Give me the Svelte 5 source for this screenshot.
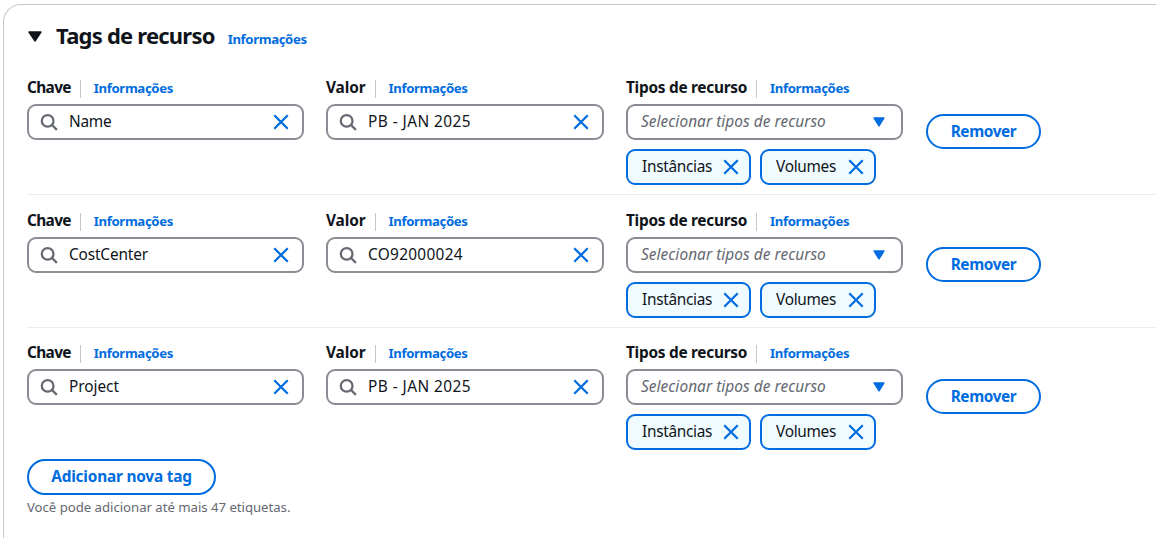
<script>
  const rows = [
    { key: 'Name', keySpacing: -0.25, value: 'PB - JAN 2025', valueSpacing: 0.45 },
    { key: 'CostCenter', keySpacing: -0.15, value: 'CO92000024', valueSpacing: 0.3 },
    { key: 'Project', keySpacing: -0.05, value: 'PB - JAN 2025', valueSpacing: 0.45 },
  ];
  const types = ['Instâncias', 'Volumes'];
</script>

{#snippet close()}
  <svg class="close" viewBox="0 0 16 16" width="18" height="18"><path d="m2 2 12 12M14 2 2 14" /></svg>
{/snippet}

{#snippet label(text, spacing)}
  <div class="label"><strong style:letter-spacing="{spacing}px">{text}</strong><span class="sep"></span><a class="info">Informações</a></div>
{/snippet}

{#snippet search(text, spacing)}
  <div class="input">
    <svg class="search" viewBox="0 0 16 16" width="18" height="18"><circle cx="6.8" cy="7" r="5.2" /><path d="m15 15-4.5-4.5" /></svg>
    <span class="value" style:letter-spacing="{spacing}px">{text}</span>
    {@render close()}
  </div>
{/snippet}

<section class="card">
  <header>
    <svg class="toggle" viewBox="0 0 14 11" width="14" height="11"><path d="M1 1h12L7 10z" /></svg>
    <h2>Tags de recurso</h2>
    <a class="info">Informações</a>
  </header>

  {#each rows as row, i}
    <div class="row" class:last={i === rows.length - 1}>
      <div class="field">{@render label('Chave', -0.65)}{@render search(row.key, row.keySpacing)}</div>
      <div class="field middle">{@render label('Valor', -0.1)}{@render search(row.value, row.valueSpacing)}</div>
      <div class="field">
        {@render label('Tipos de recurso', -0.27)}
        <div class="input select">
          <span class="placeholder">Selecionar tipos de recurso</span>
          <svg class="caret" viewBox="0 0 12 10" width="12" height="10"><path d="M1 1h10L6 9z" /></svg>
        </div>
        <div class="tokens">
          {#each types as type}
            <div class="token" class:wide={type === 'Instâncias'}><span>{type}</span>{@render close()}</div>
          {/each}
        </div>
      </div>
      <button class="remove">Remover</button>
    </div>
  {/each}

  <button class="add">Adicionar nova tag</button>
  <p>Você pode adicionar até mais 47 etiquetas.</p>
</section>

<style>
  :global(body) { background: #fff; overflow: hidden; }
  .card {
    box-sizing: border-box;
    height: 534px;
    margin: 4px -20px 0 3px;
    padding: 0 0 0 23px;
    border: 1px solid #c6c6cd;
    border-bottom: 0;
    border-radius: 18px 0 0 0;
    color: #0f141a;
    font: 15.4px/22px 'Noto Sans', sans-serif;
  }
  header { display: flex; align-items: center; height: 57px; }
  .toggle { margin: 5px 0 0 1px; fill: #0f141a; stroke: #0f141a; stroke-width: 1.4; stroke-linejoin: round; }
  h2 { margin: 3px 0 0 14px; font-size: 22px; font-weight: 700; line-height: 28px; letter-spacing: -0.78px; white-space: nowrap; }
  header .info { margin: 10px 0 0 13px; }
  .info { color: #006ce0; font-size: 13.2px; font-weight: 700; letter-spacing: -0.38px; white-space: nowrap; }
  .row {
    box-sizing: border-box;
    display: flex;
    height: 133px;
    padding-top: 13px;
    border-bottom: 1px solid #ebebf0;
  }
  .row.last { height: 131px; padding-top: 12px; border-bottom: 0; }
  .field { width: 277px; }
  .field.middle { width: 278px; margin: 0 22px; }
  .label { display: flex; align-items: center; height: 25px; padding-bottom: 4px; white-space: nowrap; }
  .sep { width: 1px; height: 18px; margin: 2px 13px 0 9px; background: #c6c6cd; }
  .label .info { margin-top: 1px; }
  .input {
    box-sizing: border-box;
    display: flex;
    align-items: center;
    height: 36px;
    padding: 0 12px 0 11px;
    border: 2px solid #8c8c94;
    border-radius: 9px;
  }
  svg { flex: none; }
  .search { fill: none; stroke: #656871; stroke-width: 2; }
  .close { fill: none; stroke: #006ce0; stroke-width: 2; }
  .value { flex: 1; margin-left: 11px; white-space: nowrap; }
  .placeholder { flex: 1; color: #656871; font-style: italic; letter-spacing: 0.06px; white-space: nowrap; }
  .select { padding: 0 16px 0 13px; }
  .caret { fill: #006ce0; stroke: #006ce0; stroke-width: 1.4; stroke-linejoin: round; }
  .tokens { display: flex; gap: 9px; margin-top: 9px; }
  .token {
    box-sizing: border-box;
    display: flex;
    align-items: center;
    justify-content: space-between;
    width: 116px;
    height: 36px;
    padding: 0 9px 0 14px;
    border: 2px solid #006ce0;
    border-radius: 9px;
    background: #f0fbff;
    letter-spacing: -0.3px;
  }
  .token.wide { width: 125px; }
  button {
    box-sizing: border-box;
    height: 36px;
    padding: 0;
    border: 2px solid #006ce0;
    border-radius: 22px;
    background: #fff;
    color: #006ce0;
    font: 700 15.4px/22px 'Noto Sans', sans-serif;
    letter-spacing: -0.2px;
    white-space: nowrap;
  }
  .remove { width: 115px; height: 35px; margin: 39px 0 0 23px; letter-spacing: -0.4px; }
  .add { display: block; width: 189px; }
  p { margin: 1px 0 0; color: #656871; font-size: 13.2px; line-height: 22px; letter-spacing: -0.03px; white-space: nowrap; }
</style>
